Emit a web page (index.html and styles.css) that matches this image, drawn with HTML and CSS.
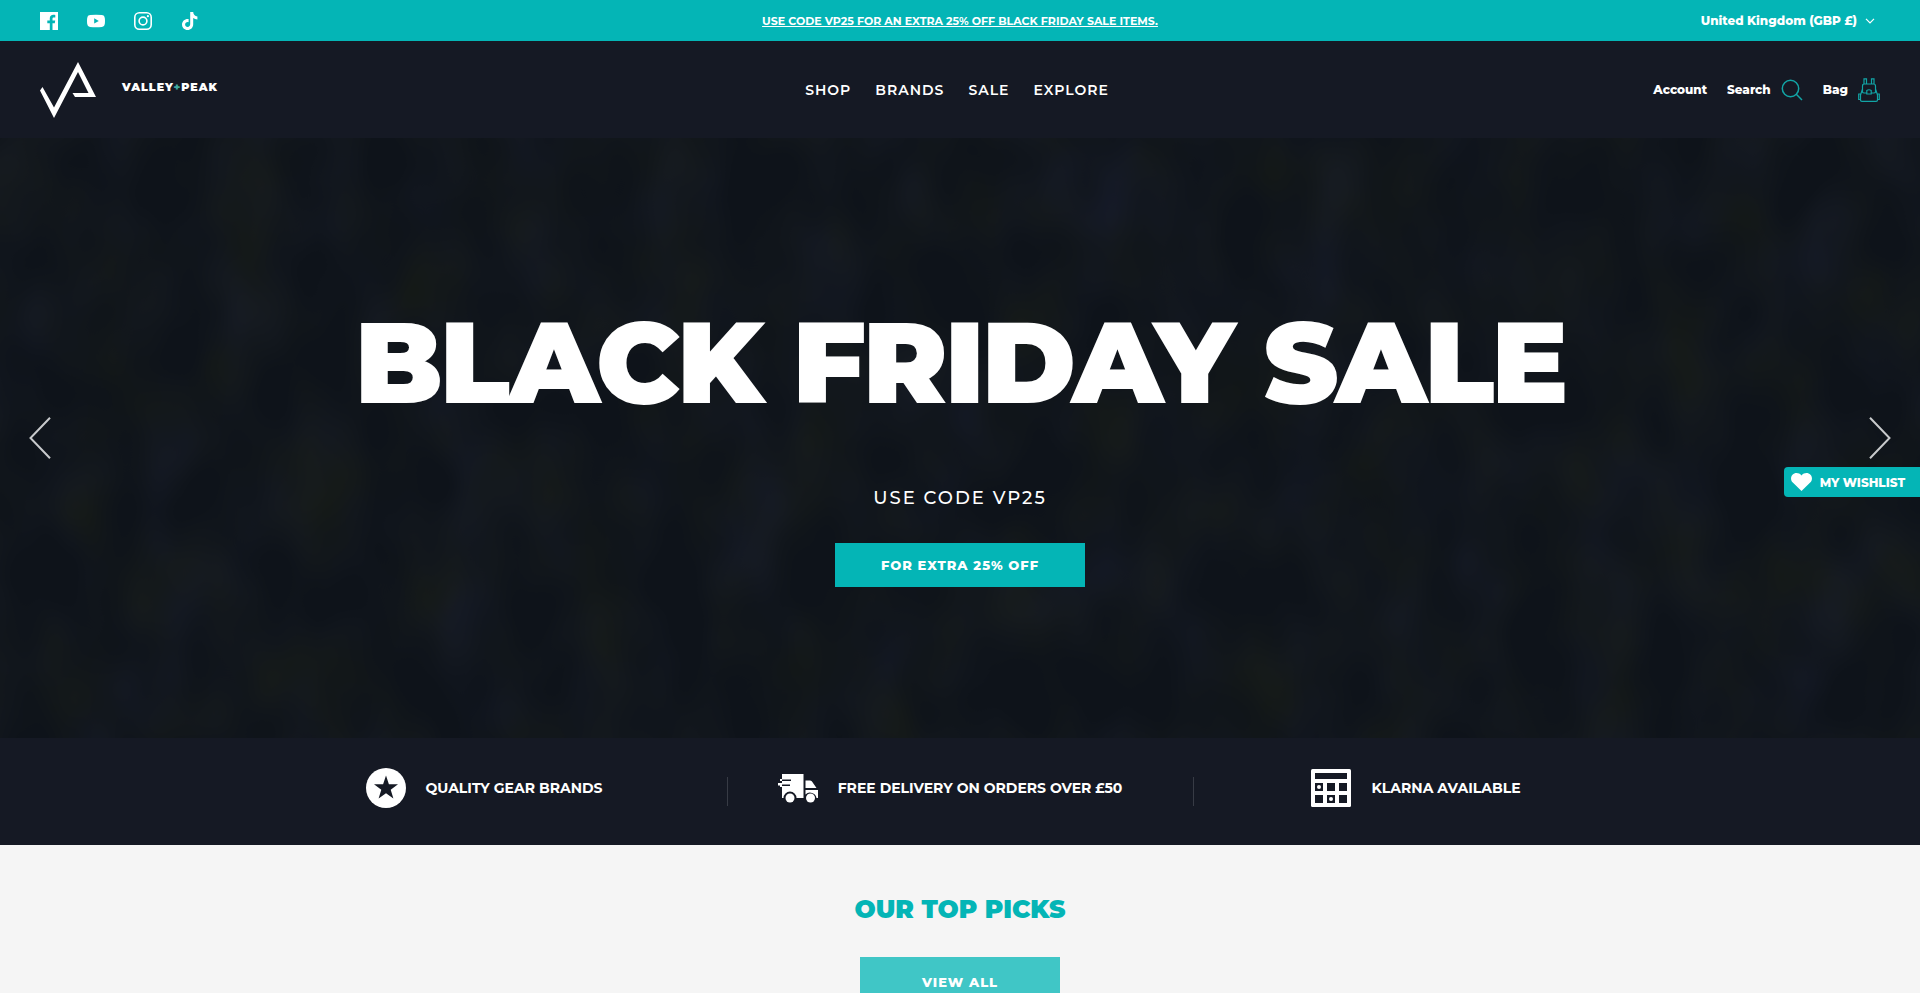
FILE: index.html
```
<!DOCTYPE html>
<html lang="en">
<head>
    <meta charset="UTF-8">
    <meta name="viewport" content="width=device-width, initial-scale=1.0">
    <title>Valley + Peak</title>
    <link rel="stylesheet" href="styles.css">
</head>
<body>
    <div class="top-bar">
        <div class="social">
            <a href="#" aria-label="Facebook">
                <svg width="18" height="18" viewBox="0 0 18 18"><path fill="#fff" d="M0 0h18v18h-5.500v-6.800h2.300l.4-2.800h-2.700V6.700c0-.8.400-1.300 1.400-1.300h1.400V2.900c-.4-.1-1.100-.1-1.900-.1-2.200 0-3.600 1.300-3.600 3.500v2.100H7.300v2.800h2.500V18H0z"/></svg>
            </a>
            <a href="#" aria-label="YouTube">
                <svg width="18" height="18" viewBox="0 0 18 18"><path fill="#fff" fill-rule="evenodd" d="M3 3.100Q9 2.500 15 3.100Q17.600 3.300 17.800 6Q18.200 9 17.800 12Q17.600 14.700 15 14.900Q9 15.500 3 14.900Q.4 14.700.2 12Q-.2 9 .2 6Q.4 3.300 3 3.100zM7.200 6.300v5.200L11.800 9z"/></svg>
            </a>
            <a href="#" aria-label="Instagram">
                <svg width="18" height="18" viewBox="0 0 18 18" fill="none" stroke="#fff" stroke-width="1.600"><rect x=".8" y=".8" width="16.400" height="16.400" rx="4.500"/><circle cx="9" cy="9" r="3.900"/><circle cx="13.900" cy="4.200" r="1.100" fill="#fff" stroke="none"/></svg>
            </a>
            <a href="#" aria-label="TikTok">
                <svg width="18" height="18" viewBox="0 0 18 18"><path fill="#fff" d="M9.200 0h3c.2 2.500 1.600 4.100 4.200 4.400v3c-1.600 0-3-.5-4.200-1.300v6.100c0 3.400-2.500 5.800-5.600 5.800C3.500 18 1 15.500 1 12.500c0-3.400 3-6 6.600-5.500v3.200C5.700 9.700 4.100 10.800 4.100 12.500c0 1.400 1.100 2.400 2.500 2.400 1.600 0 2.600-1.100 2.600-2.900z"/></svg>
            </a>
        </div>
        <a class="announcement" href="#">USE CODE VP25 FOR AN EXTRA 25% OFF BLACK FRIDAY SALE ITEMS.</a>
        <button class="currency" type="button">
            United Kingdom (GBP £)
            <svg width="10" height="6" viewBox="0 0 10 6" fill="none" stroke="#fff" stroke-width="1.200"><path d="M1 .8l4 4 4-4"/></svg>
        </button>
    </div>

    <header>
        <a class="logo" href="#">
            <svg width="56" height="56" viewBox="0 0 56 56"><path fill="#fff" d="M2.500 25L14 45.500 38 0 56 35H35L32.500 31H48.500L38 10 14 56 0 28.500z"/></svg>
            <span class="logo-text">VALLEY<span class="plus">+</span>PEAK</span>
        </a>
        <nav>
            <a href="#">SHOP</a>
            <a href="#">BRANDS</a>
            <a href="#">SALE</a>
            <a href="#">EXPLORE</a>
        </nav>
        <div class="header-links">
            <a href="#">Account</a>
            <a href="#">Search
                <svg width="22" height="22" viewBox="0 0 22 22" fill="none" stroke="#12a5a6" stroke-width="1.500"><circle cx="9.500" cy="9.500" r="8.200"/><path d="M15.300 15.300l5.700 5.700"/></svg>
            </a>
            <a href="#">Bag
                <svg width="22" height="24" viewBox="0 0 22 24" fill="none" stroke="#12a5a6" stroke-width="1.200"><path d="M6 6V.8h2.500V6M13.500 6V.8H16V6M4.500 14V8q0-2 2-2h9q2 0 2 2v6M4.500 11L2.500 17v5q0 1.400 1.400 1.400h14.200q1.400 0 1.400-1.400v-5l-2-6M4.300 14q.5 1 2 1h2.500M13.200 15h2.500q1.500 0 2-1M8.800 12.500q2.200-1.500 4.400 0V16H8.800zM2.500 16H.7v5.500h1.800M19.500 16h1.800v5.500h-1.800"/></svg>
            </a>
        </div>
    </header>

    <main>
        <section class="hero">
            <!-- Dark mottled backdrop -->
            <svg class="hero-bg" width="100%" height="100%" aria-hidden="true">
                <filter id="mottle" x="0" y="0" width="100%" height="100%" color-interpolation-filters="sRGB">
                    <feTurbulence type="fractalNoise" baseFrequency="0.014 0.010" numOctaves="2" seed="4"/>
                    <feColorMatrix values="0 0 0 0 0.085  0 0 0 0 0.104  0 0.10 0 0 0.070  2 0 0 0 -0.6"/>
                </filter>
                <rect width="100%" height="100%" filter="url(#mottle)"/>
            </svg>
            <button class="arrow arrow-prev" type="button" aria-label="Previous slide">
                <svg width="22" height="42" viewBox="0 0 22 42" fill="none" stroke="#c8cacc" stroke-width="2"><path d="M21 .7L1.500 21 21 41.300"/></svg>
            </button>
            <h1>BLACK FRIDAY SALE</h1>
            <p>USE CODE VP25</p>
            <a class="btn" href="#">FOR EXTRA 25% OFF</a>
            <button class="arrow arrow-next" type="button" aria-label="Next slide">
                <svg width="22" height="42" viewBox="0 0 22 42" fill="none" stroke="#c8cacc" stroke-width="2"><path d="M1 .7L20.500 21 1 41.300"/></svg>
            </button>
        </section>

        <section class="features">
            <div class="feature">
                <svg width="40" height="40" viewBox="0 0 40 40"><circle cx="20" cy="20" r="20" fill="#fff"/><path fill="#151924" d="M20 7.500l2.900 8.700h9.100l-7.300 5.500 2.700 8.900L20 25.300l-7.400 5.300 2.700-8.900L8 16.200h9.100z"/></svg>
                <span>QUALITY GEAR BRANDS</span>
            </div>
            <div class="feature">
                <svg width="40" height="40" viewBox="0 0 40 40"><path fill="#fff" d="M4 6h21.500v24H18.500a6.500 6.500 0 0 0-13 0H4V19H2v-1.500H0V15h4v-2H2v-2h2z"/><path fill="#fff" d="M27.500 12.500h4.500q1 0 1.800.8L38.500 20h-11zM27.500 22H40v8h-1.500a6.500 6.500 0 0 0-11-3.500z"/><path stroke="#151924" stroke-width="1.600" d="M4 12.200h9M4 17.200h8"/><circle cx="12" cy="30" r="4.500" fill="#fff"/><circle cx="32.500" cy="30" r="4.500" fill="#fff"/></svg>
                <span>FREE DELIVERY ON ORDERS OVER £50</span>
            </div>
            <div class="feature">
                <svg width="40" height="40" viewBox="0 0 40 40"><rect y="1" width="40" height="38" rx="1.500" fill="#fff"/><path fill="#151924" d="M4 5h32v6H4zM4 15h8v8H4zM16 15h8v8h-8zM28 15h8v8h-8zM4 27h8v8H4zM16 27h8v8h-8zM28 27h8v8h-8z"/><circle cx="8" cy="19" r="2" fill="#fff"/><circle cx="20" cy="31" r="2" fill="#fff"/></svg>
                <span>KLARNA AVAILABLE</span>
            </div>
        </section>

        <section class="top-picks">
            <h2>OUR TOP PICKS</h2>
            <a class="btn btn-light" href="#">VIEW ALL</a>
        </section>
    </main>

    <button class="wishlist" type="button">
        <svg width="21" height="18" viewBox="0 0 21 18"><path fill="#fff" d="M10.500 18L1.800 9.600C-.5 7.300-.5 3.900 1.500 1.800c2.300-2.400 6.400-2.400 9 .7 2.600-3.100 6.700-3.100 9-.7 2 2.100 2 5.500-.3 7.800z"/></svg>
        MY WISHLIST
    </button>
</body>
</html>
```
FILE: styles.css
```
/* General Styling */
body {
    font-family: 'Montserrat', 'Inter', sans-serif;
    margin: 0;
    background-color: #f5f5f5;
    color: white;
}

a {
    color: inherit;
    text-decoration: none;
}

button {
    font-family: inherit;
    color: inherit;
    background: none;
    border: none;
    padding: 0;
    cursor: pointer;
}

svg {
    display: block;
    flex-shrink: 0;
}

/* Top Bar */
.top-bar,
header {
    display: grid;
    grid-template-columns: 1fr auto 1fr;
    align-items: center;
    padding: 0 40px;
}

.top-bar {
    height: 41px;
    background-color: #04b5b6;
}

.social {
    display: flex;
    gap: 29px;
}

.announcement {
    font-size: 11px;
    font-weight: 700;
    text-decoration: underline;
}

.currency {
    display: flex;
    align-items: center;
    justify-self: end;
    gap: 8px;
    padding-right: 5px;
    font-size: 12px;
    font-weight: 800;
}

/* Header */
header {
    height: 97px;
    background-color: #151924;
}

.logo {
    display: flex;
    align-items: center;
    justify-self: start;
    gap: 26px;
}

.logo-text {
    padding-bottom: 6px;
    font-size: 11px;
    font-weight: 900;
    letter-spacing: 1px;
}

.plus {
    color: #3fa9a0;
}

nav {
    display: flex;
    gap: 24px;
    padding-right: 6px;
    font-size: 14px;
    font-weight: 600;
    letter-spacing: 1px;
}

.header-links {
    display: flex;
    justify-self: end;
    gap: 20px;
    font-size: 12px;
    font-weight: 800;
}

.header-links a {
    display: flex;
    align-items: center;
    gap: 10px;
}

/* Hero Slide */
.hero {
    position: relative;
    display: flex;
    flex-direction: column;
    align-items: center;
    box-sizing: border-box;
    height: 600px;
    padding-top: 157px;
    background-color: #0e131a;
}

.hero-bg {
    position: absolute;
    inset: 0;
}

.hero h1,
.hero p,
.hero .btn {
    position: relative;
}

.hero h1 {
    margin: 0;
    font-size: 114px;
    font-weight: 900;
    line-height: 136px;
    letter-spacing: -3px;
    white-space: nowrap;
}

.hero p {
    margin: 55px 0 32px;
    font-size: 18px;
    font-weight: 500;
    line-height: 25px;
    letter-spacing: 2px;
}

.btn {
    box-sizing: border-box;
    width: 250px;
    background-color: #04b5b6;
    font-size: 13px;
    font-weight: 800;
    line-height: 44px;
    letter-spacing: 1px;
    text-align: center;
}

.arrow {
    position: absolute;
    top: calc(50% - 21px);
}

.arrow-prev {
    left: 29px;
}

.arrow-next {
    right: 29px;
}

/* Features */
.features {
    display: grid;
    grid-template-columns: repeat(3, 1fr);
    align-items: center;
    height: 107px;
    padding: 0 calc(50% - 699px);
    background-color: #151924;
    font-size: 14px;
    font-weight: 700;
}

.feature {
    position: relative;
    display: flex;
    align-items: center;
    justify-content: center;
    gap: 20px;
    padding: 0 20px 7px 0;
}

.feature + .feature::before {
    content: '';
    position: absolute;
    top: 9px;
    left: 0;
    width: 1px;
    height: 29px;
    background-color: #373b45;
}

/* Top Picks */
.top-picks {
    display: flex;
    flex-direction: column;
    align-items: center;
    gap: 32px;
    padding: 48px 0;
}

.top-picks h2 {
    margin: 0;
    color: #04b5b6;
    font-size: 25px;
    font-weight: 900;
    line-height: 32px;
}

.btn-light {
    width: 200px;
    background-color: #40c6c6;
    line-height: 50px;
}

/* Wishlist Tab */
.wishlist {
    position: fixed;
    top: 467px;
    right: 0;
    display: flex;
    align-items: center;
    gap: 8px;
    height: 30px;
    padding: 0 15px 0 7px;
    border-radius: 4px 0 0 4px;
    background-color: #04b5b6;
    font-size: 12px;
    font-weight: 800;
}
```
